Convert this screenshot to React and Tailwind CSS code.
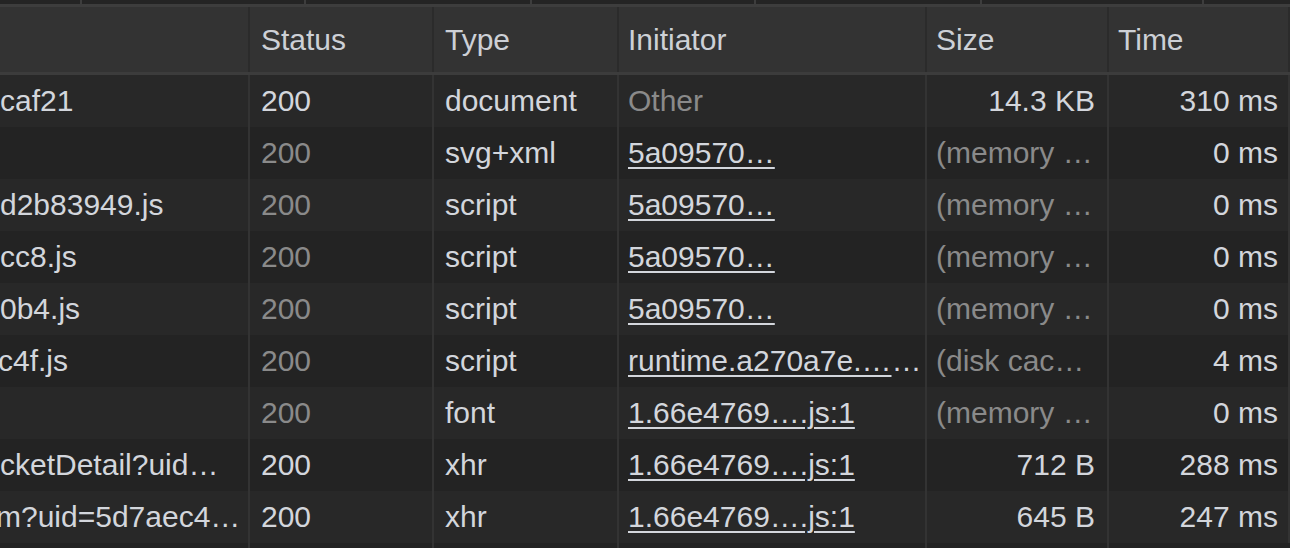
import React from 'react';
import clsx from 'clsx';

const cols = [
  { key: 'name', label: '', width: 'w-[250px]' },
  { key: 'status', label: 'Status', width: 'w-[184px]' },
  { key: 'type', label: 'Type', width: 'w-[185px]' },
  { key: 'initiator', label: 'Initiator', width: 'w-[308px] !pl-[9px]' },
  { key: 'size', label: 'Size', width: 'w-[182px] !pl-[9px]' },
  { key: 'time', label: 'Time', width: 'flex-1 !pl-[9px]' },
];

const mem = '(memory …';

const rows = [
  { name: 'caf21', status: '200', live: true, type: 'document', initiator: 'Other', link: false, size: '14.3 KB', sizeLive: true, time: '310 ms' },
  { name: '', status: '200', type: 'svg+xml', initiator: '5a09570…', link: true, size: mem, time: '0 ms' },
  { name: 'd2b83949.js', status: '200', type: 'script', initiator: '5a09570…', link: true, size: mem, time: '0 ms' },
  { name: 'cc8.js', status: '200', type: 'script', initiator: '5a09570…', link: true, size: mem, time: '0 ms' },
  { name: '0b4.js', status: '200', type: 'script', initiator: '5a09570…', link: true, size: mem, time: '0 ms' },
  { name: 'c4f.js', status: '200', type: 'script', initiator: 'runtime.a270a7e.…', link: true, tail: '…', size: '(disk cac…', time: '4 ms', shift: '-ml-[2px]' },
  { name: '', status: '200', type: 'font', initiator: '1.66e4769….js:1', link: true, size: mem, time: '0 ms' },
  { name: 'cketDetail?uid…', status: '200', live: true, type: 'xhr', initiator: '1.66e4769….js:1', link: true, size: '712 B', sizeLive: true, time: '288 ms' },
  { name: 'm?uid=5d7aec4…', status: '200', live: true, type: 'xhr', initiator: '1.66e4769….js:1', link: true, size: '645 B', sizeLive: true, time: '247 ms', shift: '-ml-[4px]' },
];

const bright = 'text-[#d3d6dc]';
const dim = 'text-[#8a8a8a]';

function Cell({ className, children, header }) {
  return (
    <div
      className={clsx(
        'h-full flex items-center shrink-0 overflow-hidden whitespace-nowrap border-r-2 pl-[11px] pr-[12px]',
        header ? 'border-[#2b2b2b]' : 'border-[#333333]',
        className
      )}
    >
      {children}
    </div>
  );
}

export default function App() {
  return (
    <div className="w-[1290px] h-[548px] overflow-hidden bg-[#232323] font-['Liberation_Sans',Arial,sans-serif] text-[30px] leading-none">
      {/* strip of the pane above */}
      <div className="flex h-[4px] bg-[#242424]">
        <div className="w-[82px] border-r-2 border-[#3d3d3d]" />
        <div className="w-[224px] border-r-2 border-[#3d3d3d]" />
        <div className="w-[226px] border-r-2 border-[#3d3d3d]" />
        <div className="w-[224px] border-r-2 border-[#3d3d3d]" />
        <div className="w-[226px] border-r-2 border-[#3d3d3d]" />
        <div className="w-[222px] border-r-2 border-[#3d3d3d]" />
        <div className="flex-1" />
      </div>
      <div className="h-[3px] bg-[#3d3d3d]" />

      {/* header */}
      <div className="flex h-[68px] bg-[#333333] border-b-[3px] border-[#3c3c3c]">
        {cols.map((c) => (
          <Cell key={c.key} header className={clsx(c.width, 'text-[#cdd0d6]')}>
            {c.label}
          </Cell>
        ))}
      </div>

      {/* body */}
      {rows.map((r, i) => (
        <div
          key={i}
          className={clsx('flex h-[52px]', i % 2 === 0 ? 'bg-[#282828]' : 'bg-[#232323]')}
        >
          <Cell className={clsx('w-[250px] !pl-0', bright)}>
            <span className={r.shift}>{r.name}</span>
          </Cell>
          <Cell className={clsx('w-[184px]', r.live ? bright : dim)}>{r.status}</Cell>
          <Cell className={clsx('w-[185px]', bright)}>{r.type}</Cell>
          <Cell className={clsx('w-[308px] !pl-[9px]', r.link ? bright : dim)}>
            <span className={r.link ? 'underline decoration-2 underline-offset-[4px]' : ''}>
              {r.initiator}
            </span>
            {r.tail && <span>{r.tail}</span>}
          </Cell>
          <Cell className={clsx('w-[182px] !pl-[9px]', r.sizeLive ? clsx('justify-end', bright) : dim)}>
            {r.size}
          </Cell>
          <Cell className={clsx('flex-1 !pl-[9px] justify-end !pr-[10px] border-r-0', bright)}>{r.time}</Cell>
        </div>
      ))}
      <div className="h-[52px] bg-[#232323] flex">
        <Cell className="w-[250px]" />
        <Cell className="w-[184px]" />
        <Cell className="w-[185px]" />
        <Cell className="w-[308px]" />
        <Cell className="w-[182px]" />
      </div>
    </div>
  );
}
